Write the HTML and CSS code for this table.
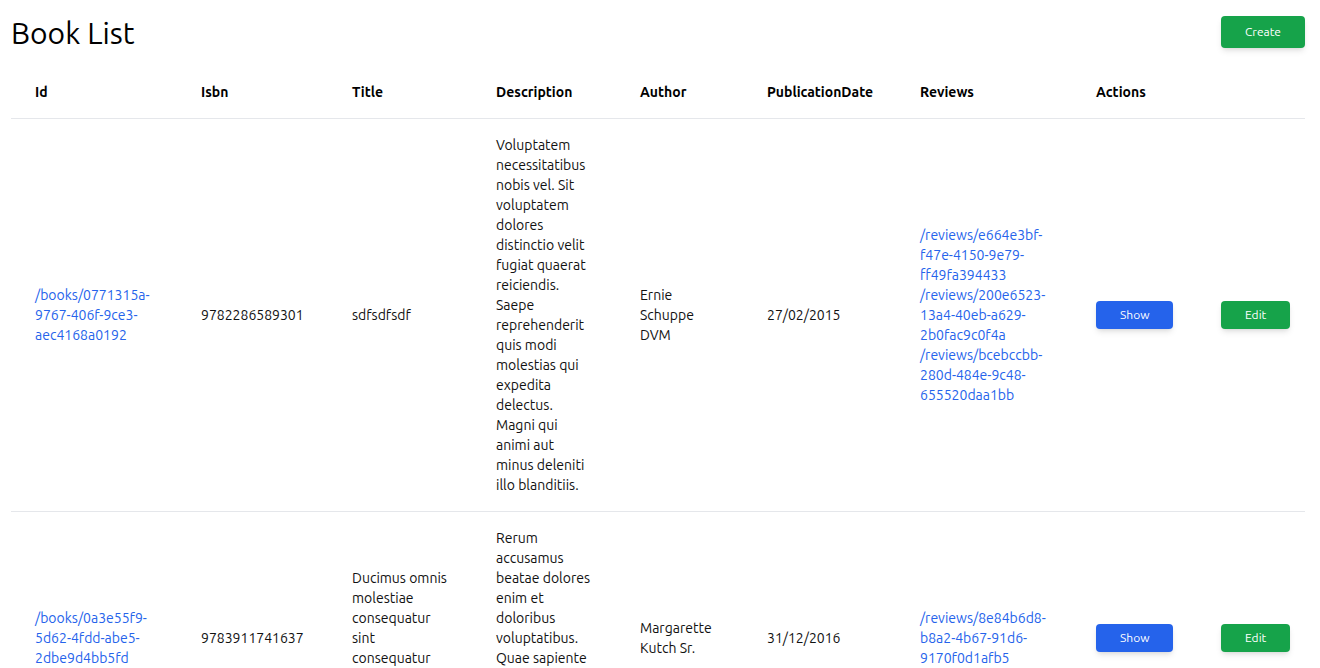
FILE: index.html
```html
<!DOCTYPE html>
<html>
<head>
  <title>Book List</title>
  <link rel="stylesheet" href="styles.css">
</head>
<body>
  <div class="page">
    <div class="page-head">
      <h1 class="page-title">Book List</h1>
      <a class="btn btn-green btn-create" href="#">Create</a>
    </div>

    <table class="books">
      <colgroup>
        <col class="c-id">
        <col class="c-isbn">
        <col class="c-title">
        <col class="c-desc">
        <col class="c-author">
        <col class="c-date">
        <col class="c-reviews">
        <col class="c-show">
        <col class="c-edit">
      </colgroup>
      <thead>
        <tr>
          <th>Id</th>
          <th>Isbn</th>
          <th>Title</th>
          <th>Description</th>
          <th>Author</th>
          <th>PublicationDate</th>
          <th>Reviews</th>
          <th colspan="2">Actions</th>
        </tr>
      </thead>
      <tbody>
        <tr>
          <td><a class="link" href="#">/books/0771315a-9767-406f-9ce3-aec4168a0192</a></td>
          <td>9782286589301</td>
          <td>sdfsdfsdf</td>
          <td>Voluptatem necessitatibus nobis vel. Sit voluptatem dolores distinctio velit fugiat quaerat reiciendis. Saepe reprehenderit quis modi molestias qui expedita delectus. Magni qui animi aut minus deleniti illo blanditiis.</td>
          <td>Ernie Schuppe DVM</td>
          <td>27/02/2015</td>
          <td>
            <a class="link" href="#">/reviews/e664e3bf-f47e-4150-9e79-ff49fa394433</a><br>
            <a class="link" href="#">/reviews/200e6523-13a4-40eb-a629-2b0fac9c0f4a</a><br>
            <a class="link" href="#">/reviews/bcebccbb-280d-484e-9c48-655520daa1bb</a>
          </td>
          <td><a class="btn btn-blue" href="#">Show</a></td>
          <td><a class="btn btn-green" href="#">Edit</a></td>
        </tr>
        <tr>
          <td><a class="link" href="#">/books/0a3e55f9-5d62-4fdd-abe5-2dbe9d4bb5fd</a></td>
          <td>9783911741637</td>
          <td>Ducimus omnis molestiae consequatur sint consequatur quia dolorem voluptas.</td>
          <td>Rerum accusamus beatae dolores enim et doloribus voluptatibus. Quae sapiente quia et illum nostrum ut omnis rerum fugit.</td>
          <td>Margarette Kutch Sr.</td>
          <td>31/12/2016</td>
          <td>
            <a class="link" href="#">/reviews/8e84b6d8-b8a2-4b67-91d6-9170f0d1afb5</a>
          </td>
          <td><a class="btn btn-blue" href="#">Show</a></td>
          <td><a class="btn btn-green" href="#">Edit</a></td>
        </tr>
      </tbody>
    </table>
  </div>
</body>
</html>
```

FILE: styles.css
```css
body {
  margin: 0;
  font-family: Ubuntu, "Open Sans", sans-serif;
  color: #111;
  background: #fff;
}

.page {
  padding: 16px 15px 0 11px;
}

.page-head {
  display: flex;
  justify-content: space-between;
  align-items: flex-start;
}

.page-title {
  margin: -1px 0 0;
  font-size: 30px;
  line-height: 36px;
  font-weight: 400;
  color: #000;
}

/* buttons */
.btn {
  display: inline-block;
  padding: 6px 24px;
  font-size: 12px;
  line-height: 16px;
  color: #fff;
  text-decoration: none;
  border-radius: 4px;
  box-shadow: 0 4px 6px -1px rgba(0, 0, 0, 0.1), 0 2px 4px -2px rgba(0, 0, 0, 0.1);
}

.btn-create {
  padding: 8px 24px;
}

.btn-green {
  background: #16a34a;
}

.btn-blue {
  background: #2563eb;
}

/* table */
.books {
  width: 100%;
  margin-top: 15px;
  border-collapse: collapse;
  table-layout: fixed;
  font-size: 14px;
  line-height: 20px;
}

.books th {
  padding: 16px 24px;
  text-align: left;
  font-weight: 600;
  color: #000;
}

.books td {
  padding: 16px 24px;
  vertical-align: middle;
  overflow-wrap: break-word;
}

.books thead tr,
.books tbody tr {
  border-bottom: 1px solid #e5e7eb;
}

.c-id { width: 166px; }
.c-isbn { width: 151px; }
.c-title { width: 144px; }
.c-desc { width: 144px; }
.c-author { width: 127px; }
.c-date { width: 153px; }
.c-reviews { width: 176px; }
.c-show { width: 125px; }
.c-edit { width: 108px; }

.link {
  color: #2563eb;
  text-decoration: none;
}
```
